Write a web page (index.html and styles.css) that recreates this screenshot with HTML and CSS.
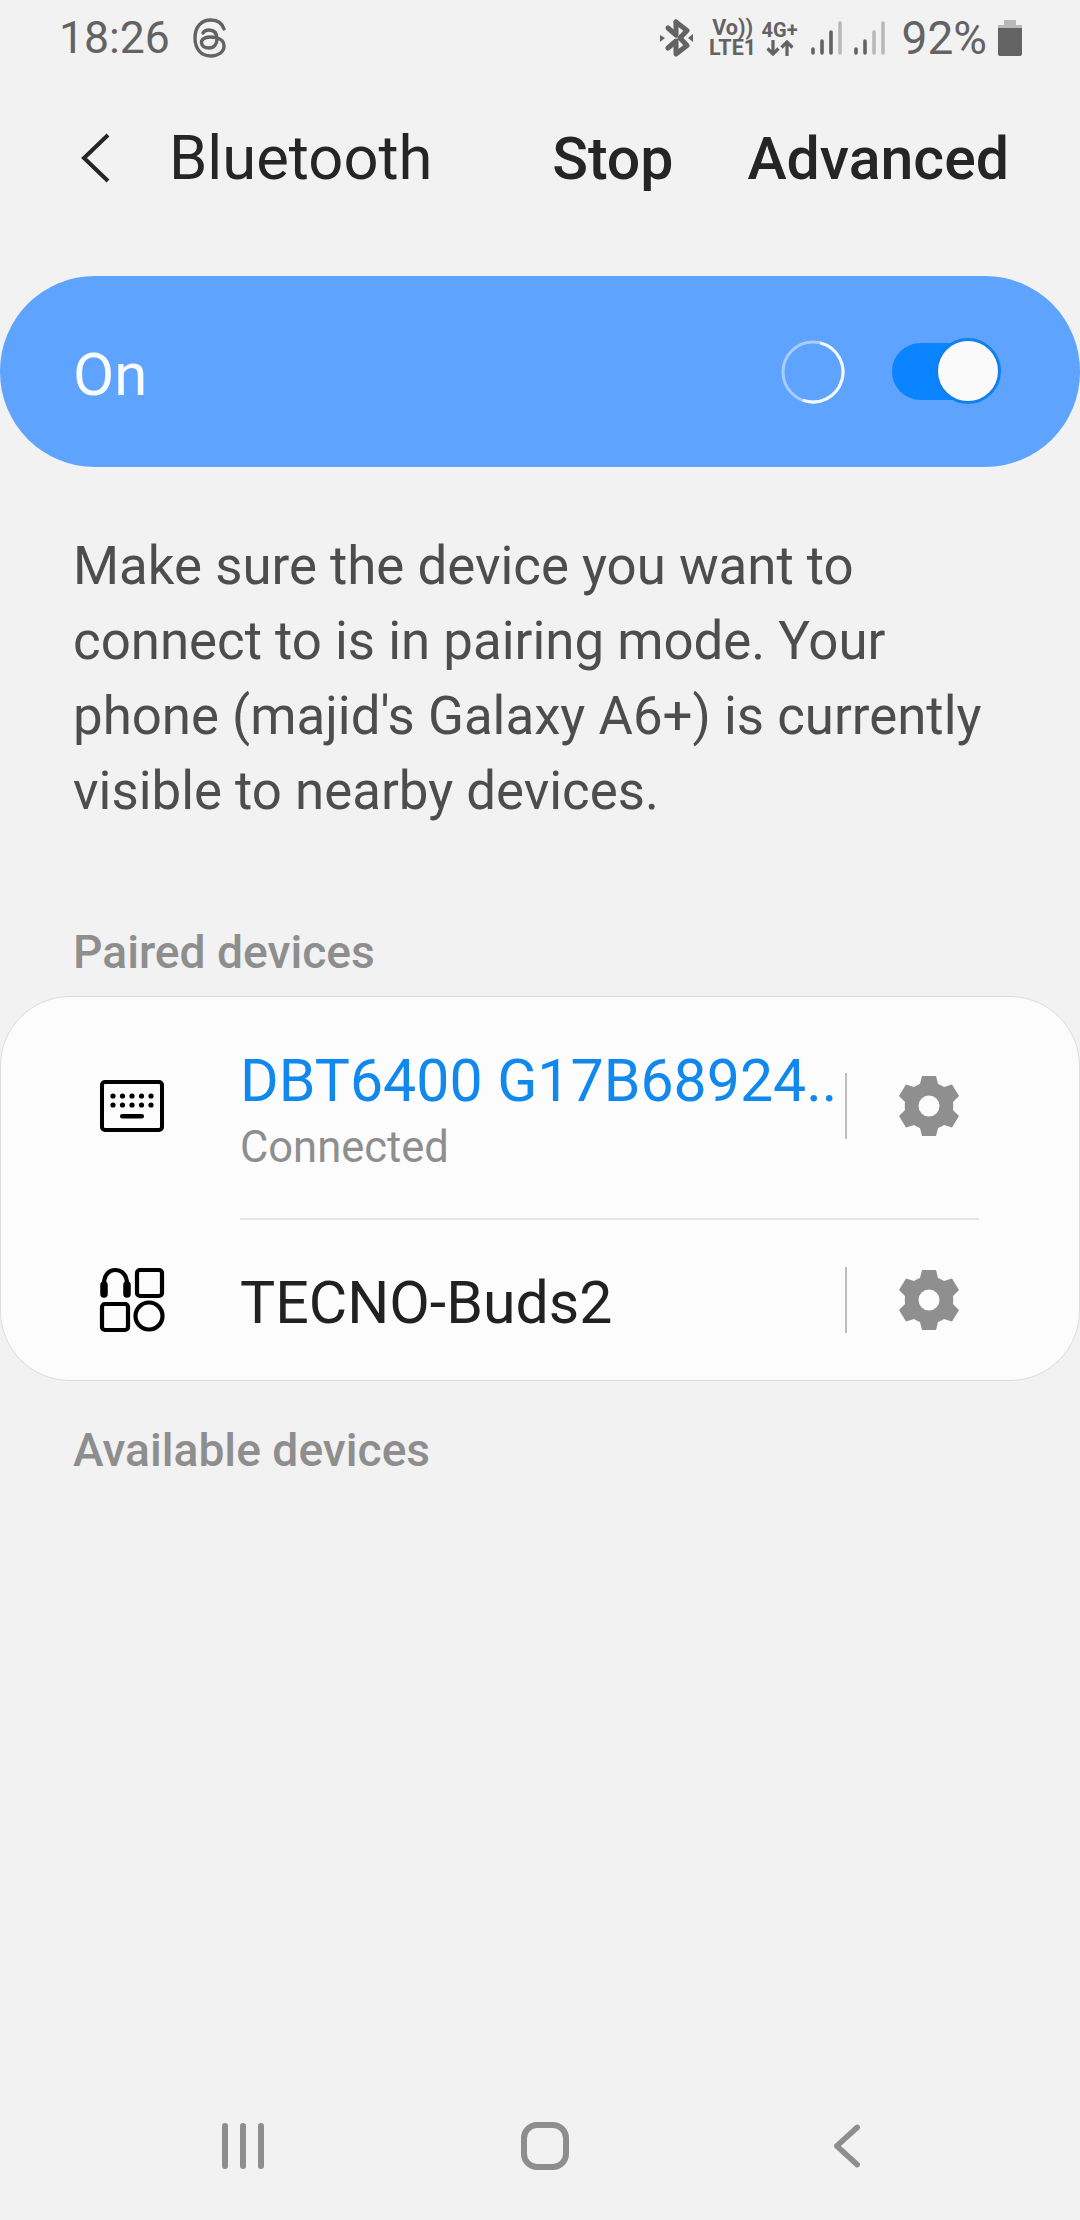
FILE: index.html
```html
<!DOCTYPE html>
<html lang="en">
<head>
<meta charset="utf-8">
<title>Bluetooth</title>
<link rel="stylesheet" href="styles.css">
</head>
<body>
<div class="page">
  <div class="status">
    <div class="status-left">
      <span class="time">18:26</span>
      <svg class="threads" viewBox="0 0 34 40" fill="none" stroke="#636363" stroke-width="3.4" stroke-linecap="round">
        <path d="M31 11C29 5 24 2 18 2C8 2 2 9 2 20C2 31 8 38 18 38C25 38 31 34 31 28C31 22 25 19 17 19C11 19 8 22 8.500 25C9 28 12 30 16 30C21 30 24 26 24 21C24 15 21 12 16 12C13 12 11 13 10 15"/>
      </svg>
    </div>
    <div class="status-right">
      <svg class="bt" viewBox="0 0 34 38" fill="#636363">
        <path d="M16 3L27 11.500L20 19L27 26.500L16 35V22L8 29" fill="none" stroke="#636363" stroke-width="5" stroke-linejoin="round" stroke-linecap="round"/>
        <path d="M16 16V3M16 16L8 9" fill="none" stroke="#636363" stroke-width="5" stroke-linecap="round"/>
        <path d="M0 16L5 19L0 23ZM33 15L28 19L33 23Z"/>
      </svg>
      <div class="net net-vo"><span>Vo))</span><span>LTE1</span></div>
      <div class="net net-4g"><span>4G+</span>
        <svg class="arrows" viewBox="0 0 28 16" fill="none" stroke="#636363" stroke-width="3.200"><path d="M7 0V14M1.500 8.500L7 14L12.500 8.500M21 16V2M15.500 7.500L21 2L26.500 7.500"/></svg>
      </div>
      <svg class="signal" viewBox="0 0 32 34" stroke-width="3.600" stroke-linecap="round">
        <g stroke="#636363"><path d="M2 32V28M11 32V20M20 32V11"/></g><path d="M29 32V2" stroke="#b9b9b9"/>
      </svg>
      <svg class="signal" viewBox="0 0 32 34" stroke-width="3.600" stroke-linecap="round">
        <g stroke="#636363"><path d="M2 32V28M11 32V20"/></g><path d="M20 32V11M29 32V2" stroke="#b9b9b9"/>
      </svg>
      <span class="pct">92%</span>
      <svg class="batt" viewBox="0 0 24 36"><path d="M6 0H18V5H6Z" fill="#b9b9b9"/><path d="M0 5H24V8H0Z" fill="#b9b9b9"/><path d="M0 8H24V34Q24 36 22 36H2Q0 36 0 34Z" fill="#636363"/></svg>
    </div>
  </div>

  <div class="header">
    <svg class="back" viewBox="0 0 30 50" fill="none" stroke="#252525" stroke-width="4"><path d="M28 2L4 25L28 48"/></svg>
    <span class="title">Bluetooth</span>
    <span class="action act-stop">Stop</span>
    <span class="action">Advanced</span>
  </div>

  <div class="banner">
    <span class="banner-label">On</span>
    <svg class="spinner" viewBox="0 0 64 64" fill="none" stroke-width="3">
      <circle cx="32" cy="32" r="30" stroke="#a9cdfb"/>
      <path d="M39.200 2.900A30 30 0 1 1 21.700 60.200" stroke="#f4f9ff"/>
    </svg>
    <div class="toggle"><div class="thumb"></div></div>
  </div>

  <p class="desc">Make sure the device you want to connect to is in pairing mode. Your phone (majid's Galaxy A6+) is currently visible to nearby devices.</p>

  <div class="section">Paired devices</div>

  <div class="card">
    <div class="row row-tall">
      <div class="dev-icon">
        <svg class="kbd" viewBox="0 0 64 52">
          <rect x="2" y="2" width="60" height="48" rx="3" fill="none" stroke="#000" stroke-width="4"/>
          <g fill="#000"><circle cx="13" cy="16" r="2.600"/><circle cx="22.500" cy="16" r="2.600"/><circle cx="32" cy="16" r="2.600"/><circle cx="41.500" cy="16" r="2.600"/><circle cx="51" cy="16" r="2.600"/><circle cx="13" cy="25" r="2.600"/><circle cx="22.500" cy="25" r="2.600"/><circle cx="32" cy="25" r="2.600"/><circle cx="41.500" cy="25" r="2.600"/><circle cx="51" cy="25" r="2.600"/><rect x="20" y="34" width="24" height="4.500" rx="2.250"/></g>
        </svg>
      </div>
      <div class="dev-text dev-text-double">
        <div class="dev-name connected">DBT6400 G17B68924..</div>
        <div class="dev-sub">Connected</div>
      </div>
      <div class="vline"></div>
      <svg class="gear" viewBox="0 0 60 62"><use href="#gear-shape"/></svg>
    </div>
    <div class="rule"></div>
    <div class="row">
      <div class="dev-icon">
        <svg class="buds" viewBox="0 0 66 66" fill="none" stroke="#000" stroke-width="4.200">
          <path d="M5 26V17C5 8 10 3 16 3C23 3 28 8 28 17V26"/>
          <path d="M5 18V27M28 18V27" stroke-width="7.500" stroke-linecap="round"/>
          <rect x="38" y="3" width="25" height="26" rx="3"/>
          <rect x="3" y="37" width="26" height="26" rx="3"/>
          <circle cx="50" cy="49" r="13.500"/>
        </svg>
      </div>
      <div class="dev-text dev-text-single">
        <div class="dev-name">TECNO-Buds2</div>
      </div>
      <div class="vline"></div>
      <svg class="gear" viewBox="0 0 60 62"><use href="#gear-shape"/></svg>
    </div>
  </div>

  <div class="section section-avail">Available devices</div>

  <div class="nav">
    <svg class="nav-recent" viewBox="0 0 42 46" fill="none" stroke="#8e8e8e" stroke-width="6" stroke-linecap="round"><path d="M3 3V43M21 3V43M39 3V43"/></svg>
    <svg class="nav-home" viewBox="0 0 48 48" fill="none" stroke="#8e8e8e" stroke-width="6"><rect x="3" y="3" width="42" height="42" rx="13"/></svg>
    <svg class="nav-back" viewBox="0 0 28 46" fill="none" stroke="#8e8e8e" stroke-width="6" stroke-linecap="round" stroke-linejoin="round"><path d="M25 3L3 23L25 43"/></svg>
  </div>

  <svg class="defs" width="0" height="0">
    <defs>
      <path id="gear-shape" fill="#8f8f8f" fill-rule="evenodd" d="M23 1H37L39 9Q42 10 45 12L53 9.500L60 21L54 27Q54.500 31 54 35L60 41L53 52.500L45 50Q42 52 39 53L37 61H23L21 53Q18 52 15 50L7 52.500L0 41L6 35Q5.500 31 6 27L0 21L7 9.500L15 12Q18 10 21 9ZM30 20.500A10.500 10.500 0 1 0 30 41.500A10.500 10.500 0 1 0 30 20.500Z"/>
    </defs>
  </svg>
</div>
</body>
</html>
```
FILE: styles.css
```css
* { box-sizing: border-box; }
html, body { margin: 0; padding: 0; }
body { background: #f2f2f2; font-family: Roboto, "Noto Sans", sans-serif; }
.page { width: 1080px; height: 2220px; display: flex; flex-direction: column; background: #f2f2f2; overflow: hidden; }

.status { height: 76px; padding: 0 58px 0 59px; display: flex; align-items: center; justify-content: space-between; color: #636363; }
.status-left { display: flex; align-items: center; gap: 23px; }
.time { font-size: 44.500px; line-height: 76px; }
.threads { width: 34px; height: 40px; }
.status-right { display: flex; align-items: center; }
.bt { width: 34px; height: 38px; margin-right: 16px; }
.net { display: flex; flex-direction: column; align-items: center; font-weight: 700; color: #636363; }
.net-vo { font-size: 21.500px; line-height: 20px; width: 46px; margin-right: 6px; }
.net-4g { font-size: 20px; line-height: 20px; width: 36px; margin-right: 13px; }
.arrows { width: 28px; height: 16px; }
.signal { width: 32px; height: 34px; margin-right: 11px; }
.pct { font-size: 46px; line-height: 76px; margin: 0 11px 0 5px; }
.batt { width: 24px; height: 36px; }

.header { height: 164px; padding: 0 71px 0 80px; display: flex; align-items: center; color: #252525; }
.back { width: 30px; height: 50px; margin-right: 59px; }
.title { font-size: 61.500px; flex: 1; }
.action { font-size: 59px; font-weight: 500; }
.act-stop { margin-right: 74px; }

.banner { margin-top: 36px; height: 191px; border-radius: 95px; background: #5ea3fd; padding: 0 82px 0 73px; display: flex; align-items: center; }
.banner-label { flex: 1; font-size: 60px; color: #f8fbff; padding-top: 5px; }
.spinner { width: 64px; height: 64px; margin-right: 47px; }
.toggle { width: 106px; height: 57px; border-radius: 29px; background: #0a84ff; position: relative; }
.thumb { position: absolute; right: -3px; top: -5px; width: 66px; height: 66px; border-radius: 50%; background: #fafafa; border: 3px solid #127fee; }

.desc { margin: 62px 60px 0 73px; font-size: 52.800px; line-height: 75px; color: #4d4d4d; }

.section { margin-top: 98px; padding-left: 73px; font-size: 46.200px; line-height: 50px; font-weight: 500; color: #8e8e8e; }
.section-avail { margin-top: 44px; }

.card { margin-top: 19px; height: 385px; background: #fcfcfc; border: 1px solid #dcdcdc; border-radius: 70px; display: flex; flex-direction: column; }
.row { flex: 1; display: flex; align-items: center; padding-right: 120px; }
.row-tall { flex: none; height: 221px; padding-bottom: 4px; }
.dev-icon { width: 239px; padding-left: 98px; display: flex; }
.kbd { width: 64px; height: 52px; margin-left: 1px; }
.buds { width: 66px; height: 66px; }
.dev-text { flex: 1; min-width: 0; white-space: nowrap; }
.dev-text-double { padding-top: 7px; }
.dev-text-single { padding-top: 6px; }
.dev-name { font-size: 59px; line-height: 70px; color: #212121; }
.connected { color: #1088ee; }
.dev-sub { font-size: 43.500px; line-height: 50px; color: #8e8e8e; margin-top: 7px; }
.vline { width: 2px; height: 66px; background: #bdbdbd; margin-right: 52px; }
.gear { width: 60px; height: 62px; }
.rule { height: 2px; margin: 0 100px 0 239px; background: #e4e4e4; }

.nav { margin-top: auto; height: 100px; padding: 0 220px 49px 222px; display: flex; align-items: center; justify-content: space-between; }
.nav-recent { width: 42px; height: 46px; }
.nav-home { width: 48px; height: 48px; margin-left: -8px; }
.nav-back { width: 26px; height: 46px; }
.defs { position: absolute; }
```
